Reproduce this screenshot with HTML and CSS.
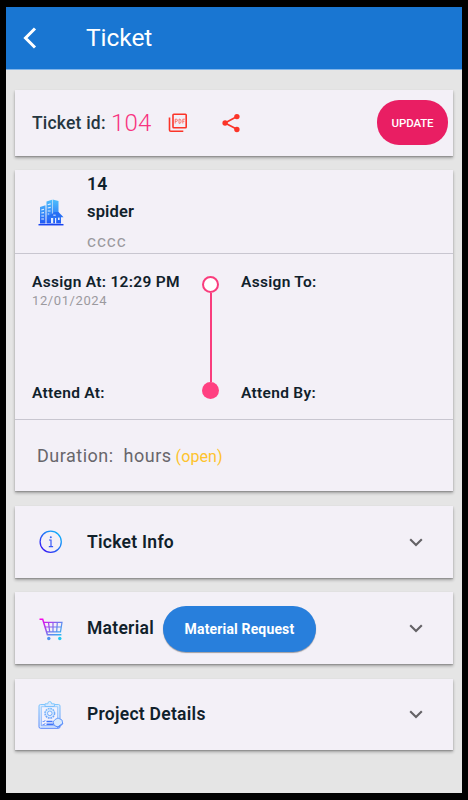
FILE: index.html
```html
<!DOCTYPE html>
<html lang="en">
<head>
<meta charset="utf-8">
<title>Ticket</title>
<link rel="stylesheet" href="styles.css">
</head>
<body>
<div class="screen">
  <header class="appbar">
    <svg class="back" width="14" height="22" viewBox="0 0 14 22"><path d="M12 1.500 2.500 11 12 20.500" fill="none" stroke="#fff" stroke-width="3"/></svg>
    <h1>Ticket</h1>
  </header>
  <main>
    <section class="card id-card">
      <span class="id-label">Ticket id:</span>
      <span class="id-number">104</span>
      <svg class="pdf" width="20" height="20" viewBox="0 0 20 20"><g fill="none" stroke="#fb3428" stroke-width="1.600"><rect x="5" y="1.300" width="13.200" height="13.400" rx=".8"/><path d="M1.500 4.500V17q0 1.300 1.300 1.300h12.500"/></g><g fill="none" stroke="#fb5a50" stroke-width=".8"><path d="M7.200 10.500V6.200h1.200q1 0 1 1.100t-1 1.100H7.200M11 6.200v4.100h.8q1.300 0 1.300-2t-1.300-2.100zM14.800 10.500V6.200h2M14.800 8.300h1.600"/></g></svg>
      <svg class="share" width="18" height="20" viewBox="0 0 18 20"><path d="M15 3.500 3 10l12 6.300" fill="none" stroke="#fb3428" stroke-width="1.700"/><g fill="#fb3428"><circle cx="14.900" cy="3.600" r="2.700"/><circle cx="3.100" cy="10" r="2.700"/><circle cx="14.900" cy="16.500" r="2.700"/></g></svg>
      <button class="update">UPDATE</button>
    </section>

    <section class="card detail-card">
      <div class="client">
        <svg class="building" width="26" height="27" viewBox="0 0 26 27">
          <defs><linearGradient id="gb" gradientUnits="userSpaceOnUse" x1="0" y1="0" x2="0" y2="26"><stop offset="0" stop-color="#4fc0fc"/><stop offset=".5" stop-color="#3a90f8"/><stop offset="1" stop-color="#1c50f5"/></linearGradient></defs>
          <path d="M2 24.500V8l5.500-1.800v18.300zM8.500 24.500V2.500L14 .8v23.700zM14.600.6 20.500 2v12h-5.900zM11 17h12v7.500H11z" fill="url(#gb)"/>
          <path d="M3.300 11l2.700-.8M3.300 14l2.700-.4M3.300 17h2.700M3.300 20h2.700M9.700 5.800l3-.9M9.700 9l3-.6M9.700 12h2.800M9.700 15h1.500" stroke="#ddecfd" stroke-width="1.100"/>
          <path d="M13 19h2.200v5H13zM20 18.500h1.600v2.500H20zM17 19h1.200v5.500H17z" fill="#e4eefd"/>
          <path d="M9 18.300l7.500-5.300h4l5 5.300z" fill="#276ff4"/><path d="M15.300 16.200h2.400" stroke="#ddecfd"/>
          <path d="M.5 25.700h25" stroke="#1944ef" stroke-width="1.500"/>
        </svg>
        <div class="client-text">
          <strong>14</strong>
          <strong class="spider">spider</strong>
          <span>cccc</span>
        </div>
      </div>
      <div class="timeline">
        <div class="col left">
          <div><b>Assign At: 12:29 PM</b><small>12/01/2024</small></div>
          <b>Attend At:</b>
        </div>
        <div class="track"><i class="ring"></i><i class="line"></i><i class="dot"></i></div>
        <div class="col">
          <b>Assign To:</b>
          <b>Attend By:</b>
        </div>
      </div>
      <div class="duration"><span>Duration:</span><span class="hours">hours</span><em>(open)</em></div>
    </section>

    <section class="card row">
      <svg class="icon" width="26" height="28" viewBox="0 0 26 28">
        <defs><linearGradient id="gi" x1="0" y1="1" x2="1" y2="0"><stop offset="0" stop-color="#3b00f5"/><stop offset=".5" stop-color="#236df5"/><stop offset="1" stop-color="#08c3fc"/></linearGradient></defs>
        <circle cx="12.700" cy="13.700" r="10.600" fill="none" stroke="url(#gi)" stroke-width="1.300"/>
        <path d="M11 12h2v6.500M10.800 18.700h4.300" fill="none" stroke="#3758f6" stroke-width="1.200"/><circle cx="12.800" cy="9.200" r="1" fill="#3769f6"/>
      </svg>
      <h2>Ticket Info</h2>
      <svg class="chev" width="14" height="9" viewBox="0 0 14 9"><path d="M1.200 1.200 7 7l5.800-5.800" fill="none" stroke="#646266" stroke-width="2.100"/></svg>
    </section>

    <section class="card row material">
      <svg class="icon" width="26" height="28" viewBox="0 0 26 28">
        <defs><linearGradient id="gc" gradientUnits="userSpaceOnUse" x1="2" y1="4" x2="24" y2="24"><stop offset="0" stop-color="#ff00e6"/><stop offset=".22" stop-color="#c625ec"/><stop offset=".55" stop-color="#7478ee"/><stop offset="1" stop-color="#10cdf4"/></linearGradient></defs>
        <g fill="none" stroke="url(#gc)"><path d="M1.500 4.200h3.200l4.700 15.600h14" stroke-width="1.500"/><path d="M6 7.300h18l-1.500 9.500H9M7 12h16M10.500 7.300l1.200 9.500M15 7.300v9.500M19.300 7.300l-.6 9.500" stroke-width="1.200"/></g>
        <circle cx="10.800" cy="23.500" r="1.700" fill="#4a91ef"/><circle cx="21.800" cy="23.500" r="1.700" fill="#20c8ef"/>
      </svg>
      <h2>Material</h2>
      <button class="request">Material Request</button>
      <svg class="chev" width="14" height="9" viewBox="0 0 14 9"><path d="M1.200 1.200 7 7l5.800-5.800" fill="none" stroke="#646266" stroke-width="2.100"/></svg>
    </section>

    <section class="card row project">
      <svg class="icon" width="26" height="28" viewBox="0 0 26 28">
        <defs><linearGradient id="gp" gradientUnits="userSpaceOnUse" x1="0" y1="0" x2="0" y2="28"><stop offset="0" stop-color="#86cffd"/><stop offset="1" stop-color="#5583fa"/></linearGradient></defs>
        <g fill="#d9e9fd" stroke="url(#gp)" stroke-width="1"><rect x="1" y="3.500" width="21" height="23.800" rx="1.500"/><path d="M3.300 5.700h16.400v19H3.300z" fill="#f2f1fc" stroke-width=".7"/><path d="M7 5.500V2.800h2.800q0-2.300 1.900-2.300t1.900 2.300h2.800v2.700z"/>
        <circle cx="11.800" cy="12.300" r="4.800" stroke-dasharray="1.800 .7" stroke-width="1.500"/><circle cx="11.800" cy="12.300" r="2.300" fill="#f2f1fc"/>
        <path d="M17 18.500l3-1.500 4 2 .8 4-4.300 3.300-4.200-1.800-1.300-3.500z"/></g>
        <path d="M8.500 20.400h6M8.500 23.300h7" stroke="#3f75f8" stroke-width="1.500"/><path d="M4.700 20l1 1 1.500-1.800M4.700 23l1 1 1.500-1.800M19 26.500l5.500-4" fill="none" stroke="#5087fb"/>
      </svg>
      <h2>Project Details</h2>
      <svg class="chev" width="14" height="9" viewBox="0 0 14 9"><path d="M1.200 1.200 7 7l5.800-5.800" fill="none" stroke="#646266" stroke-width="2.100"/></svg>
    </section>
  </main>
</div>
</body>
</html>
```
FILE: styles.css
```css
* { box-sizing: border-box; }
body {
  margin: 0;
  height: 800px;
  padding: 7px 6px;
  background: #000;
  font-family: Roboto, "Liberation Sans", sans-serif;
  color: #10212b;
}
svg { display: block; flex: none; }
h1, h2 { margin: 0; white-space: nowrap; }
button { border: 0; padding: 0; font-family: inherit; color: #fff; white-space: nowrap; flex: none; }
.screen { height: 786px; background: #e5e5e5; }
.appbar {
  height: 62px;
  display: flex;
  align-items: center;
  padding-left: 17px;
  background: #1976d2;
  box-shadow: 0 1px 0 #83b5e8;
}
.appbar h1 { margin: 0 0 2px 49px; font-size: 24.5px; font-weight: 400; letter-spacing: -.05px; color: #fff; }
main { padding: 21px 9px 0; display: flex; flex-direction: column; }
.card { background: #f3f0f7; box-shadow: 0 2px 3px rgba(0,0,0,.3), 0 1px 1px rgba(0,0,0,.14); }

.id-card { height: 66px; display: flex; align-items: center; padding: 0 5px 1px 17px; white-space: nowrap; }
.id-label { width: 79px; font-size: 17.5px; font-weight: 500; letter-spacing: .2px; color: #253640; }
.id-number { width: 57px; font-size: 24px; font-weight: 350; color: #f83480; letter-spacing: .2px; }
.share { margin-left: 34px; }
.update { width: 71px; height: 45px; margin-left: auto; border-radius: 22px; background: #e91e63; font-size: 11.5px; font-weight: 500; letter-spacing: -.15px; }

.detail-card { height: 321px; margin-top: 14px; }
.client { display: flex; height: 84px; border-bottom: 1px solid #c8c6d0; }
.building { margin: 29px 0 0 23px; }
.client-text { display: flex; flex-direction: column; margin-left: 23px; line-height: 28px; letter-spacing: .3px; }
.client-text strong { font-weight: 600; font-size: 17.5px; }
.client-text .spider { font-size: 16.5px; letter-spacing: .15px; }
.client-text span { color: #9b999e; letter-spacing: 1px; line-height: 30px; font-size: 17px; }
.timeline { display: flex; height: 166px; padding: 17px 0 15px 17px; border-bottom: 1px solid #c8c6d0; white-space: nowrap; }
.col { display: flex; flex-direction: column; justify-content: space-between; }
.left { width: 170px; }
.timeline b { display: block; font-size: 15.5px; font-weight: 600; line-height: 22px; letter-spacing: .3px; }
.timeline small { display: block; font-size: 13px; line-height: 16px; letter-spacing: .6px; color: #9b999e; }
.track { width: 17px; margin: 5px 22px 5px 0; display: flex; flex-direction: column; align-items: center; }
.ring, .dot { width: 17px; height: 17px; flex: none; border-radius: 50%; background: #ff4081; }
.ring { background: #fff; border: 2px solid #f93d7d; }
.line { width: 2px; flex: 1; background: #f93d7d; }
.duration { height: 71px; display: flex; align-items: center; padding-left: 22px; font-size: 18px; letter-spacing: .5px; color: #68666b; white-space: nowrap; }
.duration .hours { margin-left: 10px; }
.duration em { margin: 2px 0 0 4px; font-style: normal; font-size: 16px; letter-spacing: .1px; color: #fec32d; }

.row { height: 72px; margin-top: 15px; padding: 0 30px 0 23px; display: flex; align-items: center; }
.row h2 { margin: 0 0 1px 23px; font-size: 17.5px; font-weight: 600; letter-spacing: .27px; }
.chev { margin-left: auto; }
.material { margin-top: 14px; padding-top: 1px; }
.project { height: 71px; }
.project h2 { margin-bottom: 2px; }
.request { width: 153px; height: 46px; margin-left: 9px; border-radius: 23px; background: #287fdc; box-shadow: 0 1px 1px rgba(0,0,0,.35); font-size: 14px; font-weight: 700; letter-spacing: .15px; }
```
